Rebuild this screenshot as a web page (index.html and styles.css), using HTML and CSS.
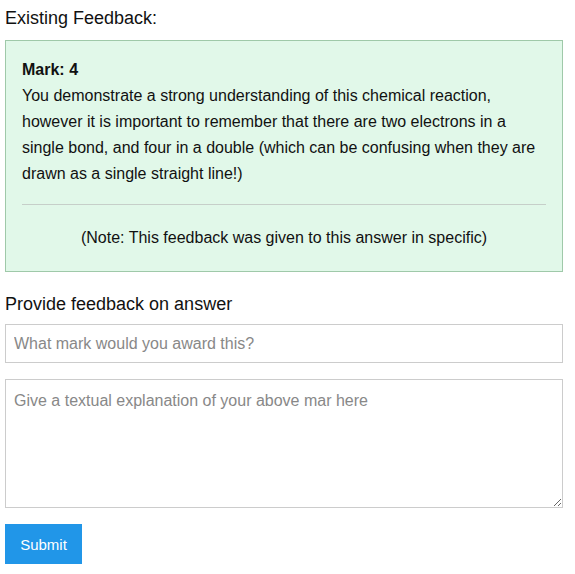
FILE: index.html
```html
<!DOCTYPE html>
<html>
<head>
<meta charset="utf-8">
<link rel="stylesheet" href="styles.css">
</head>
<body>
<div class="page">
  <h3 class="title">Existing Feedback:</h3>
  <div class="feedback">
    <div class="mark">Mark: 4</div>
    <p class="body">You demonstrate a strong understanding of this chemical reaction, however it is important to remember that there are two electrons in a single bond, and four in a double (which can be confusing when they are drawn as a single straight line!)</p>
    <hr class="sep">
    <p class="note">(Note: This feedback was given to this answer in specific)</p>
  </div>
  <h3 class="title title2">Provide feedback on answer</h3>
  <input class="field" type="text" placeholder="What mark would you award this?">
  <textarea class="area" placeholder="Give a textual explanation of your above mar here"></textarea>
  <button class="submit">Submit</button>
</div>
</body>
</html>
```
FILE: styles.css
```css
* { box-sizing: border-box; }
html, body { margin: 0; padding: 0; background: #fff; }
body { font-family: "Liberation Sans", Arial, sans-serif; color: #111; }
.page { width: 558px; margin-left: 5px; padding-top: 6px; display: flex; flex-direction: column; }
.title { margin: 0; font-size: 18px; font-weight: normal; line-height: 24px; height: 24px; }
.feedback {
  margin-top: 10px;
  background: #e1f8e9;
  border: 1px solid #9fc9a9;
  padding: 16px 16px 0 16px;
  height: 232px;
}
.mark { font-weight: bold; font-size: 16px; line-height: 26px; }
.body { margin: 0; font-size: 16px; line-height: 26px; }
.sep { margin: 17px 0 0 0; border: 0; border-top: 1px solid #c6cfc9; height: 0; }
.note { margin: 21px 0 0 0; text-align: center; font-size: 16px; line-height: 24px; }
.title2 { margin-top: 20px; }
.field {
  margin-top: 8px;
  height: 39px;
  border: 1px solid #ccc;
  padding: 0 8px;
  font-family: inherit;
  font-size: 16px;
  width: 100%;
}
.area {
  margin-top: 16px;
  height: 129px;
  border: 1px solid #ccc;
  padding: 11px 8px 10px 8px;
  font-family: inherit;
  font-size: 16px;
  line-height: 20px;
  width: 100%;
  resize: vertical;
}
.field::placeholder, .area::placeholder { color: #888; }
.submit {
  margin-top: 16px;
  align-self: flex-start;
  width: 77px;
  height: 40px;
  background: #2196e8;
  color: #fff;
  border: 0;
  font-family: inherit;
  font-size: 15px;
  padding: 0;
}
```
